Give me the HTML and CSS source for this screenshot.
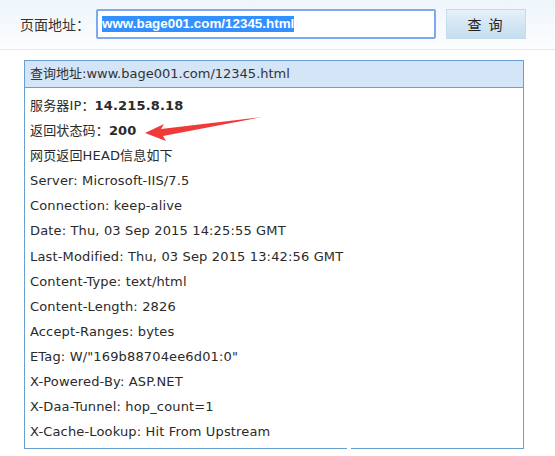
FILE: index.html
```html
<!DOCTYPE html>
<html>
<head>
<meta charset="utf-8">
<link rel="stylesheet" href="styles.css">
</head>
<body>
<div class="topbar">
  <span class="label">页面地址：</span>
  <div class="input"><span class="sel">www.bage001.com/12345.html</span></div>
  <div class="btn">查 询</div>
</div>
<div class="panel">
  <div class="head">查询地址:www.bage001.com/12345.html</div>
  <div class="body">
    <div class="row">服务器IP：<b>14.215.8.18</b></div>
    <div class="row">返回状态码：<b>200</b></div>
    <div class="row">网页返回HEAD信息如下</div>
    <div class="row">Server: Microsoft-IIS/7.5</div>
    <div class="row">Connection: keep-alive</div>
    <div class="row">Date: Thu, 03 Sep 2015 14:25:55 GMT</div>
    <div class="row">Last-Modified: Thu, 03 Sep 2015 13:42:56 GMT</div>
    <div class="row">Content-Type: text/html</div>
    <div class="row">Content-Length: 2826</div>
    <div class="row">Accept-Ranges: bytes</div>
    <div class="row">ETag: W/"169b88704ee6d01:0"</div>
    <div class="row">X-Powered-By: ASP.NET</div>
    <div class="row">X-Daa-Tunnel: hop_count=1</div>
    <div class="row">X-Cache-Lookup: Hit From Upstream</div>
  </div>
  <svg class="arrow" width="130" height="30" viewBox="0 0 130 30">
    <polygon points="0,16 19,7 16,12 117,0 18,19 21,24" fill="#f03a3a"/>
  </svg>
</div>
</body>
</html>
```
FILE: styles.css
```css
* { box-sizing: border-box; }
body {
  margin: 0;
  background: #fff;
  font-family: "DejaVu Sans", Verdana, "Noto Sans CJK SC", sans-serif;
  color: #2a2a2a;
}
.topbar {
  height: 50px;
  display: flex;
  align-items: center;
  padding-left: 20px;
  padding-bottom: 2px;
  background: linear-gradient(#eef5fb, #f7fafd 60%, #fbfdfe);
  border-bottom: 1px solid #dfe9f1;
}
.label {
  font-family: "Noto Sans CJK SC", sans-serif;
  font-size: 14px;
  color: #333;
  width: 76px;
}
.input {
  width: 340px;
  height: 30px;
  border: 2px solid #7ea9ef;
  border-radius: 2px;
  background: #fff;
  display: flex;
  align-items: center;
  padding-left: 4px;
}
.sel {
  font-family: "Liberation Sans", Arial, sans-serif;
  font-weight: bold;
  font-size: 13.4px;
  background: #3390ff;
  color: #fff;
  line-height: 16px;
}
.btn {
  margin-left: 10px;
  width: 80px;
  height: 30px;
  border: 1px solid #c6dcee;
  background: linear-gradient(#e6f1f9, #d3e6f3 50%, #c5dfee);
  font-family: "Noto Sans CJK SC", sans-serif;
  font-size: 14px;
  color: #222;
  display: flex;
  align-items: center;
  justify-content: center;
  letter-spacing: 2px;
}
.panel {
  position: relative;
  margin: 10px 0 0 24px;
  width: 500px;
  border: 1px solid #6a9fd2;
}
.panel::after {
  content: "";
  position: absolute;
  left: 322px;
  bottom: -1px;
  width: 4px;
  height: 1px;
  background: #fff;
}
.head {
  height: 27px;
  background: #d4e5f7;
  border-bottom: 1px solid #6a9fd2;
  padding-left: 5px;
  font-size: 13px;
  line-height: 26px;
  color: #333;
}
.body {
  padding: 5px 5px 4px;
  font-size: 13px;
  letter-spacing: 0.15px;
}
.row {
  height: 25.1px;
  line-height: 25px;
  white-space: nowrap;
}
.row b { font-weight: bold; }
.arrow {
  position: absolute;
  left: 120px;
  top: 56px;
}
```
